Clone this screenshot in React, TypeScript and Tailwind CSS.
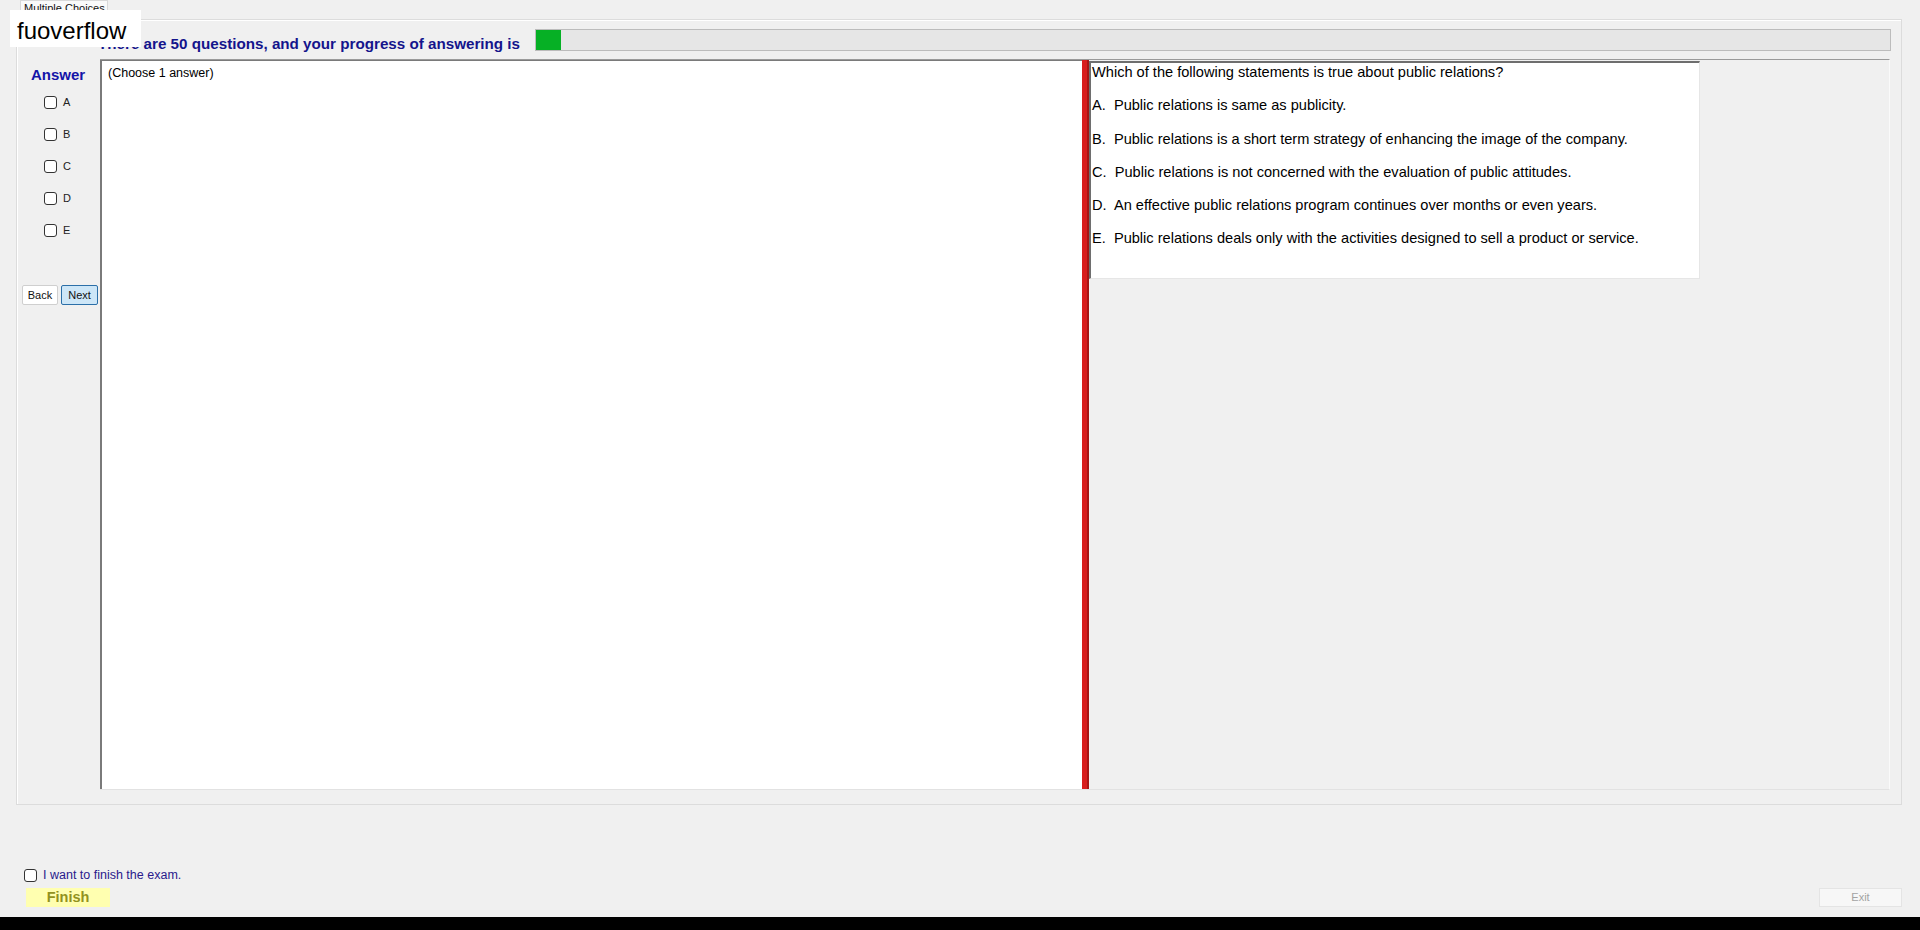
import React from 'react'

const options = [
  'A.  Public relations is same as publicity.',
  'B.  Public relations is a short term strategy of enhancing the image of the company.',
  'C.  Public relations is not concerned with the evaluation of public attitudes.',
  'D.  An effective public relations program continues over months or even years.',
  'E.  Public relations deals only with the activities designed to sell a product or service.',
]

function Box() {
  return <div className="w-[13px] h-[13px] rounded-[3px] border border-[#333333] bg-white shrink-0" />
}

export default function App() {
  return (
    <div className="relative h-[930px] w-full flex flex-col bg-[#f0f0f0] font-['Liberation_Sans',Arial,sans-serif] text-black overflow-hidden">
      {/* watermark */}
      <div className="absolute left-[10px] top-[10px] w-[131px] h-[37px] bg-white pl-[7px] pt-[5px] flex items-center text-[24px] leading-none z-10">
        fuoverflow
      </div>

      {/* tab strip */}
      <div className="h-[19px] pl-[20px] flex items-end">
        <div className="w-[88px] h-[19px] border border-b-0 border-[#d9d9d9] bg-[#fafafa] text-[11px] leading-[14px] pl-[3px] text-[#111]">
          Multiple Choices
        </div>
      </div>

      {/* main group */}
      <div className="ml-[16px] mr-[18px] h-[786px] border border-[#dcdcdc] shadow-[inset_1px_1px_0_#ffffff] flex flex-col">
        <div className="mt-[9px] h-[22px] flex items-start pl-[81px] pr-[10px]">
          <span className="mt-[6px] text-[15.2px] leading-[18px] font-bold text-[#14148c] whitespace-nowrap">
            There are 50 questions, and your progress of answering is
          </span>
          <div className="ml-[15px] flex-1 h-[22px] border border-[#bcbcbc] bg-[#e6e6e6]">
            <div className="w-[25px] h-full bg-[#06b025]" />
          </div>
        </div>

        <div className="mt-[8px] flex">
          {/* answer column */}
          <div className="w-[83px] shrink-0 flex flex-col">
            <div className="mt-[7px] pl-[14px] text-[15px] leading-[18px] font-bold text-[#1414a8]">Answer</div>
            <div className="mt-[2px] flex flex-col">
              {['A', 'B', 'C', 'D', 'E'].map(l => (
                <div key={l} className="h-[32px] pl-[27px] flex items-center gap-[6px]">
                  <Box />
                  <span className="text-[11px] text-[#222]">{l}</span>
                </div>
              ))}
            </div>
            <div className="mt-[39px] pl-[5px] flex gap-[3px]">
              <button className="w-[36px] h-[20px] border border-[#cfcfcf] bg-white rounded-[2px] text-[11px] text-[#111]">Back</button>
              <button className="w-[37px] h-[20px] border border-[#2b6fa8] bg-[#cde6f7] rounded-[2px] text-[11px] text-[#111]">Next</button>
            </div>
          </div>

          {/* split container */}
          <div className="w-[1790px] h-[731px] flex border-t border-[#9a9a9a] border-r border-r-[#fafafa] border-b border-b-[#e2e2e2]">
            <div className="w-[982px] h-full bg-white border-l-2 border-t border-[#7a7a7a] pl-[6px] pt-[5px] text-[12.5px] leading-[14px]">
              (Choose 1 answer)
            </div>
            <div className="w-[7px] h-full bg-[#d81c1c] border-r-2 border-[#a81414]" />
            <div className="flex-1 h-full bg-[#f0f0f0] pt-[1px]">
              <div className="w-[611px] h-[218px] bg-white border-l-2 border-t-2 border-[#6e6e6e] border-r border-r-[#e6e6e6] border-b border-b-[#e6e6e6] pl-[1px] pt-[1px] flex flex-col gap-[16.3px] text-[14.6px] leading-[17px]">
                <div>Which of the following statements is true about public relations?</div>
                {options.map(o => (
                  <div key={o} className="whitespace-pre">{o}</div>
                ))}
              </div>
            </div>
          </div>
        </div>
      </div>

      {/* footer */}
      <div className="mt-[64px] h-[13px] pl-[24px] flex items-center gap-[6px]">
        <Box />
        <span className="text-[12.5px] text-[#2a1a8c]">I want to finish the exam.</span>
      </div>
      <div className="mt-[6px] h-[19px] pl-[26px] pr-[18px] flex justify-between">
        <button className="w-[84px] h-[19px] bg-[#ffffb0] text-[14.5px] leading-[19px] font-bold text-[#929220]">Finish</button>
        <button className="w-[83px] h-[19px] bg-[#f7f7f7] border border-[#e4e4e4] text-[11px] text-[#a3a3a3]">Exit</button>
      </div>
      <div className="mt-[10px] h-[13px] bg-black" />
    </div>
  )
}
